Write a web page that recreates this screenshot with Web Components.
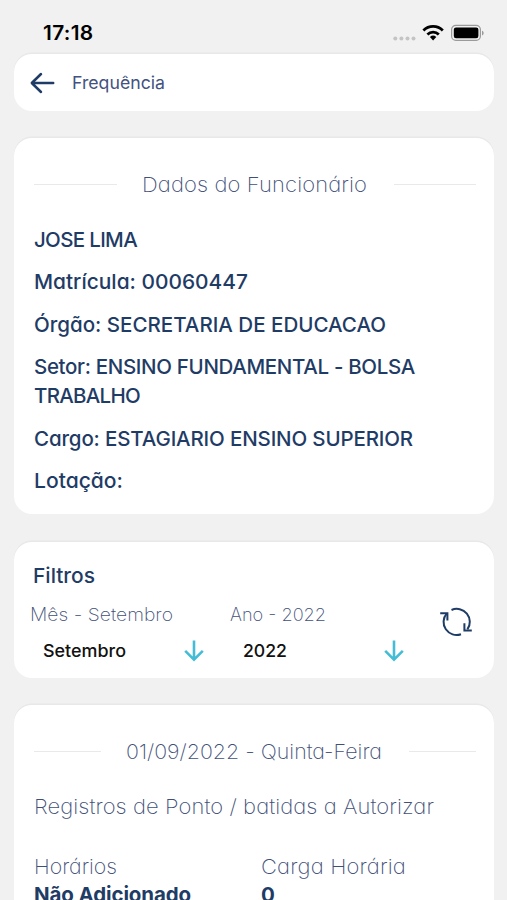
<!DOCTYPE html>
<html lang="pt-BR">
<head>
<meta charset="UTF-8">
<meta name="viewport" content="width=device-width, initial-scale=1">
<title>Frequência</title>
<style>
  body {
    margin: 0;
    height: 900px;
    overflow: hidden;
    background: #f1f1f1;
    font-family: Inter, "Liberation Sans", sans-serif;
    color: #1f3c66;
  }
</style>
</head>
<body>
<frequencia-page></frequencia-page>

<script>
// Single line of text, widened to the width given in px:
// glyphs stretch a little first, tracking takes the rest
class TextLine extends HTMLElement {
  constructor() {
    super();
    this.attachShadow({ mode: 'open' });
    this.shadowRoot.innerHTML = `
      <style>
        :host {
          display: block;
          white-space: nowrap;
          font-size: 20.5px;
          line-height: 29px;
          font-weight: 500;
          font-feature-settings: "cv11";
        }
        :host([kind="light"]) { font-weight: 250; color: #3f5078; }
        :host([kind="label"]) { font-weight: 250; font-size: 18px; color: #3f5078; }
        :host([kind="bold"]) { font-weight: 700; font-feature-settings: normal; }
        :host([kind="title"]) { font-weight: 400; font-size: 17.5px; color: #435280; font-feature-settings: normal; }
        :host([kind="value"]) { font-weight: 480; font-size: 17.5px; color: #111; font-feature-settings: normal; }
        :host([kind="clock"]) { font-weight: 600; font-size: 19.5px; color: #000; font-feature-settings: normal; }
        span { display: inline-block; transform-origin: 0 50%; }
      </style>
      <span><slot></slot></span>
    `;
  }

  connectedCallback() {
    const fit = Number(this.getAttribute('fit'));
    if (!fit) return;
    const span = this.shadowRoot.querySelector('span');
    const natural = span.getBoundingClientRect().width;
    const scale = Math.min(1.07, Math.max(1, fit / natural));
    span.style.letterSpacing = (fit / scale - natural) / this.textContent.length + 'px';
    span.style.transform = `scaleX(${scale})`;
    this.style.width = fit + 'px';
  }
}

class StatusBar extends HTMLElement {
  constructor() {
    super();
    this.attachShadow({ mode: 'open' });
    this.shadowRoot.innerHTML = `
      <style>
        :host {
          display: flex;
          align-items: center;
          justify-content: space-between;
          height: 54px;
          padding: 13px 23px 0 43px;
          box-sizing: border-box;
        }
        svg { display: block; }
      </style>
      <text-line kind="clock" fit="50.5">17:18</text-line>
      <svg width="91" height="20" viewBox="0 0 91 20">
        <g fill="#c4c4c4">
          <circle cx="2.3" cy="14.5" r="2"/><circle cx="8.4" cy="14.5" r="2"/>
          <circle cx="14.5" cy="14.5" r="2"/><circle cx="20.5" cy="14.5" r="2"/>
        </g>
        <g fill="none" stroke="#000" stroke-width="2.8">
          <path d="M30.4 6.4a13.9 13.9 0 0 1 19.4 0"/>
          <path d="M34.4 10.5a8.2 8.2 0 0 1 11.4 0"/>
        </g>
        <path d="M36.9 13a4.8 4.8 0 0 1 6.4 0L40.1 16.6z" fill="#000"/>
        <rect x="58.6" y="1.4" width="28.8" height="15" rx="4.2" fill="none" stroke="#9a9a9a" stroke-width="1.2"/>
        <rect x="60.8" y="3.6" width="24.6" height="10.6" rx="2.2" fill="#000"/>
        <path d="M89 6.8c2.2.6 2.2 4 0 4.6z" fill="#9a9a9a"/>
      </svg>
    `;
  }
}

class AppCard extends HTMLElement {
  constructor() {
    super();
    this.attachShadow({ mode: 'open' });
    this.shadowRoot.innerHTML = `
      <style>
        :host {
          display: block;
          box-sizing: border-box;
          border-radius: 18px;
          background: #fff;
          box-shadow: 0 -1.5px 0 #e8e8e8;
        }
      </style>
      <slot></slot>
    `;
  }
}

class SectionTitle extends HTMLElement {
  constructor() {
    super();
    this.attachShadow({ mode: 'open' });
    this.shadowRoot.innerHTML = `
      <style>
        :host { display: flex; align-items: center; }
        i { flex: 1; height: 1px; background: #e9e9e9; }
        .left { margin-right: 25px; }
        .right { margin-left: 27px; }
      </style>
      <i class="left"></i><slot></slot><i class="right"></i>
    `;
  }
}

class MonthPicker extends HTMLElement {
  constructor() {
    super();
    this.attachShadow({ mode: 'open' });
    this.shadowRoot.innerHTML = `
      <style>
        :host { display: block; width: 200px; }
        .row {
          display: flex;
          align-items: center;
          justify-content: space-between;
          height: 29px;
          margin-top: 7px;
          padding: 0 25px 0 13px;
        }
      </style>
      <slot name="label"></slot>
      <div class="row">
        <slot></slot>
        <svg width="22" height="24" viewBox="0 0 22 24" fill="none" stroke="#45bcd6" stroke-width="2.6">
          <path d="M11 1.6v18.8M2.2 11.9l8.8 8.8 8.8-8.8"/>
        </svg>
      </div>
    `;
  }
}

class FrequenciaPage extends HTMLElement {
  constructor() {
    super();
    this.attachShadow({ mode: 'open' });
    this.shadowRoot.innerHTML = `
      <style>
        :host { display: block; }
        main { display: flex; flex-direction: column; padding: 0 13px 0 14px; }
        .header { display: flex; align-items: center; height: 57px; padding-left: 15px; }
        .header svg { margin-right: 16px; }
        .employee { height: 376px; margin-top: 27px; padding: 32px 18px 0 20px; }
        .data { display: flex; flex-direction: column; gap: 13.5px; margin-top: 25.6px; }
        .filters { height: 136px; margin-top: 28px; padding: 19px 16px 0; }
        .filters > text-line { margin-left: 3px; }
        .fields { display: flex; margin-top: 10px; }
        .sync { margin: 6.5px 0 0 9px; }
        .day { height: 195px; margin-top: 27px; padding: 32px 18px 0 20px; border-radius: 18px 18px 0 0; }
        .registers { margin-top: 26px; }
        .hours { display: grid; grid-template-columns: 227px 1fr; margin-top: 32px; }
        .hours text-line { line-height: 27.5px; }
      </style>
      <status-bar></status-bar>
      <main>
        <app-card class="header">
          <svg width="27" height="24" viewBox="0 0 27 24" fill="none" stroke="#1f3c66" stroke-width="2.5" stroke-linecap="round" stroke-linejoin="round">
            <path d="M24.2 12H3M12 3L2.8 12l9.2 9"/>
          </svg>
          <text-line kind="title" fit="93">Frequência</text-line>
        </app-card>

        <app-card class="employee">
          <section-title><text-line kind="light" fit="225">Dados do Funcionário</text-line></section-title>
          <div class="data">
            <text-line fit="103">JOSE LIMA</text-line>
            <text-line fit="214">Matrícula: 00060447</text-line>
            <text-line fit="352">Órgão: SECRETARIA DE EDUCACAO</text-line>
            <div>
              <text-line fit="381">Setor: ENSINO FUNDAMENTAL - BOLSA</text-line>
              <text-line fit="106">TRABALHO</text-line>
            </div>
            <text-line fit="379">Cargo: ESTAGIARIO ENSINO SUPERIOR</text-line>
            <text-line fit="89">Lotação:</text-line>
          </div>
        </app-card>

        <app-card class="filters">
          <text-line fit="62">Filtros</text-line>
          <div class="fields">
            <month-picker>
              <text-line slot="label" kind="label" fit="143">Mês - Setembro</text-line>
              <text-line kind="value" fit="83">Setembro</text-line>
            </month-picker>
            <month-picker>
              <text-line slot="label" kind="label" fit="96">Ano - 2022</text-line>
              <text-line kind="value" fit="44">2022</text-line>
            </month-picker>
            <svg class="sync" width="34" height="30" viewBox="0 0 34 30" fill="none" stroke="#1f3c66" stroke-width="2">
              <path d="M12.5 3A13 13 0 0 1 28.4 22.4M22 27.2A13 13 0 0 1 7.8 6.4"/>
              <path d="M1.2 6.2H8.4V13.4M25.4 16.3V23.5H32.8"/>
            </svg>
          </div>
        </app-card>

        <app-card class="day">
          <section-title><text-line kind="light" fit="256">01/09/2022 - Quinta-Feira</text-line></section-title>
          <text-line class="registers" kind="light" fit="400">Registros de Ponto / batidas a Autorizar</text-line>
          <div class="hours">
            <text-line kind="light" fit="83">Horários</text-line>
            <text-line kind="light" fit="145">Carga Horária</text-line>
            <text-line kind="bold" fit="157">Não Adicionado</text-line>
            <text-line kind="bold">0</text-line>
          </div>
        </app-card>
      </main>
    `;
  }
}

customElements.define('text-line', TextLine);
customElements.define('status-bar', StatusBar);
customElements.define('app-card', AppCard);
customElements.define('section-title', SectionTitle);
customElements.define('month-picker', MonthPicker);
customElements.define('frequencia-page', FrequenciaPage);
</script>
</body>
</html>
